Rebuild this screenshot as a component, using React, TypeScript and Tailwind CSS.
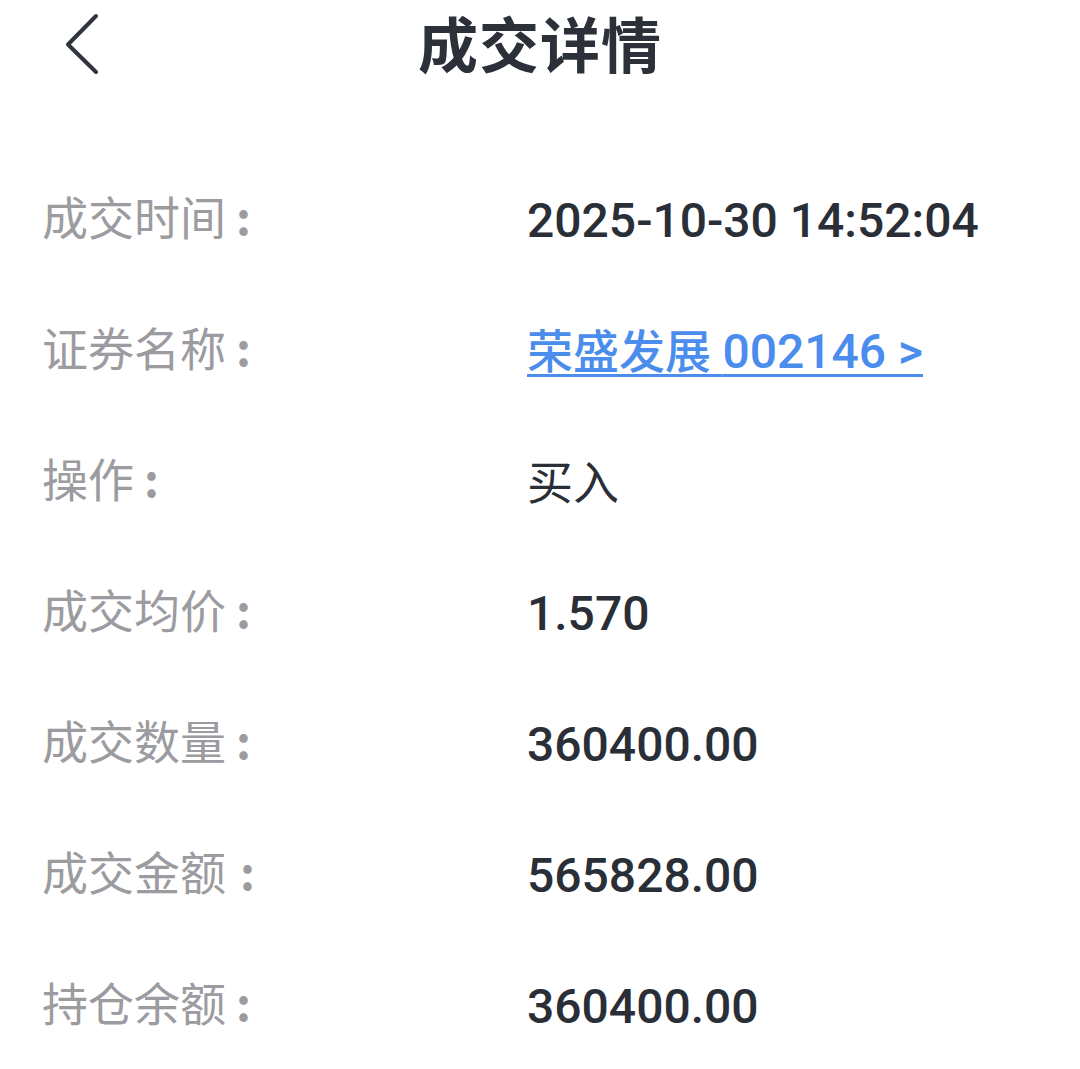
const rows: { label: string; colon?: string; value: string; kind?: "link" | "plain" }[] = [
  { label: "成交时间", value: "2025-10-30 14:52:04" },
  { label: "证券名称", value: "荣盛发展 002146 >", kind: "link" },
  { label: "操作", value: "买入", kind: "plain" },
  { label: "成交均价", value: "1.570" },
  { label: "成交数量", value: "360400.00" },
  { label: "成交金额", colon: "wide", value: "565828.00" },
  { label: "持仓余额", value: "360400.00" },
];

export default function App() {
  return (
    <div className="w-[1080px] h-[1069px] bg-white overflow-hidden font-['Roboto','Noto_Sans_CJK_SC',sans-serif]">
      <header className="relative h-[95px] flex items-center justify-center">
        <button className="absolute left-[58px] top-[12px] w-[48px] h-[64px] flex items-center justify-center">
          <svg width="40" height="62" viewBox="0 0 40 62" fill="none">
            <path d="M34 3 L6 31.5 L34 59" stroke="#30343c" strokeWidth="4" strokeLinecap="round" strokeLinejoin="round" />
          </svg>
        </button>
        <h1 className="text-[60px] leading-none font-bold text-[#2c3038] tracking-[1px]">成交详情</h1>
      </header>

      <div className="pt-[60px]">
        {rows.map((r) => (
          <div key={r.label} className="h-[131px] flex items-center pl-[42px]">
            <div className="w-[485px] pb-[12px] flex items-center text-[46px] leading-none text-[#9b9ba0] font-['Noto_Sans_CJK_SC',sans-serif]">
              <span>{r.label}</span>
              {r.colon === "wide" ? (
                <span className="ml-[14px] font-bold">:</span>
              ) : (
                <span className="ml-[10px] font-bold">:</span>
              )}
            </div>
            {r.kind === "link" ? (
              <div className="text-[46px] leading-none font-medium text-[#4b8ded] underline decoration-[3px] underline-offset-[6px]">
                荣盛发展 <span className="text-[48px]">002146 &gt;</span>
              </div>
            ) : r.kind === "plain" ? (
              <div className="pb-[8px] text-[46px] leading-none text-[#2a2e37] font-['Noto_Sans_CJK_SC',sans-serif]">{r.value}</div>
            ) : (
              <div className="text-[48px] leading-none font-medium text-[#2a2e37]">{r.value}</div>
            )}
          </div>
        ))}
      </div>
    </div>
  );
}
